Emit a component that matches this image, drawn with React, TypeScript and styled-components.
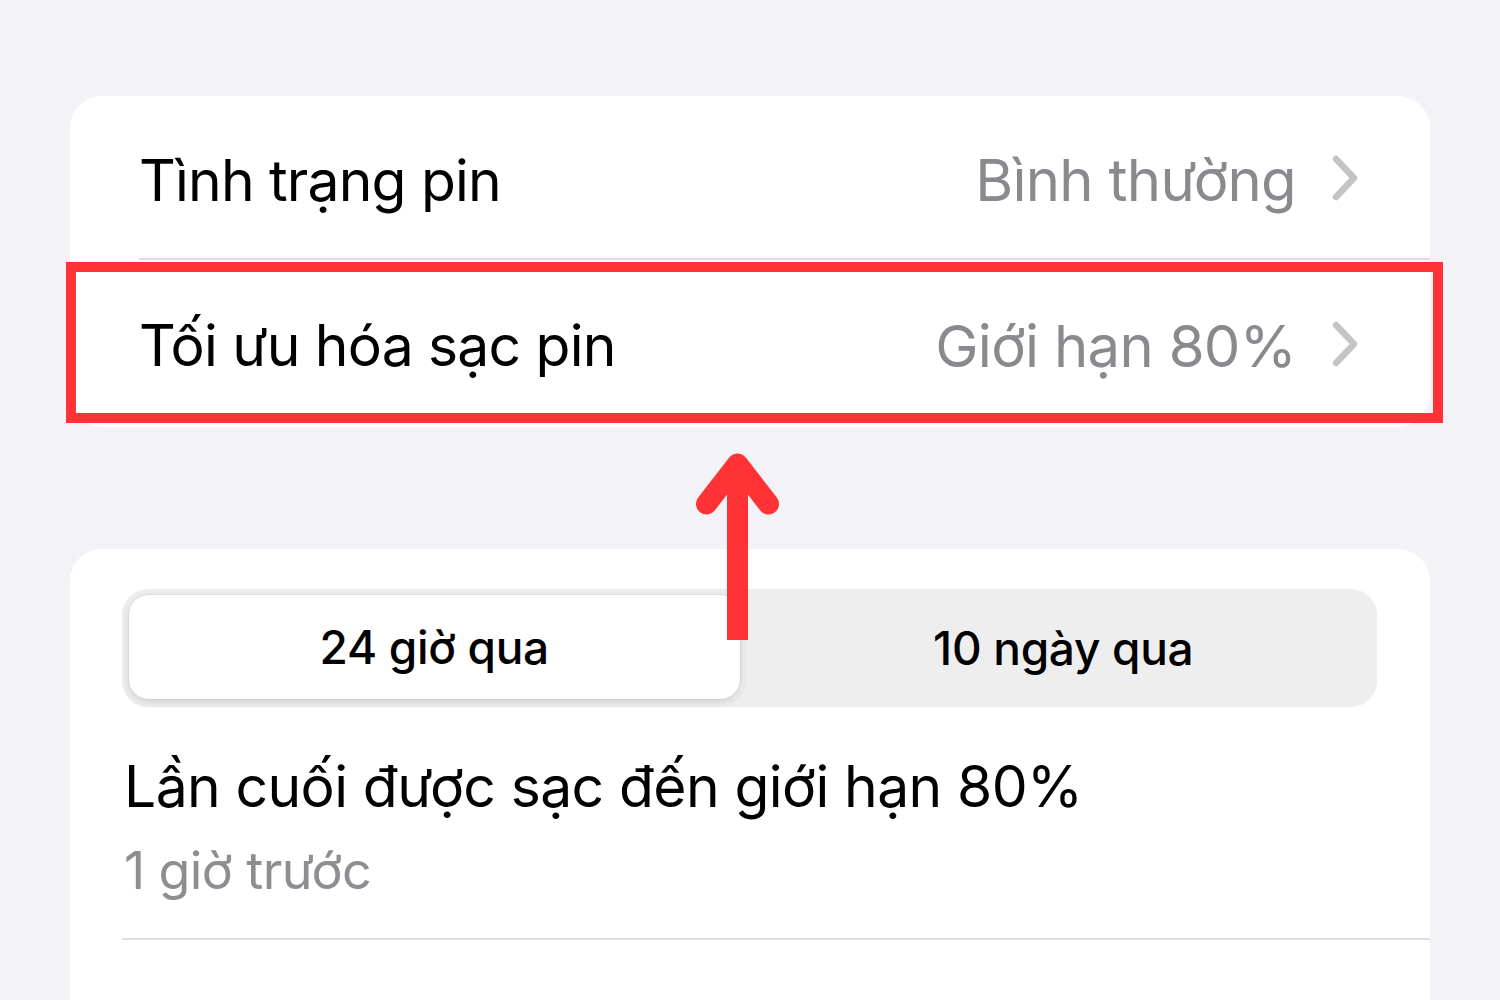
import React from "react";
import styled, { createGlobalStyle } from "styled-components";

const Global = createGlobalStyle`
  html, body { margin: 0; padding: 0; background: #f2f2f7; }
  body { font-family: Inter, "Noto Sans", "Liberation Sans", sans-serif; -webkit-font-smoothing: antialiased; }
`;

const Page = styled.div`
  position: relative;
  width: 1500px;
  height: 1000px;
  overflow: hidden;
  box-sizing: border-box;
  padding: 96px 70px 0 70px;
  display: flex;
  flex-direction: column;
  gap: 122px;
`;

const Card = styled.div<{ $open?: boolean }>`
  background: #ffffff;
  border-radius: ${(p) => (p.$open ? "32px 32px 0 0" : "32px")};
  display: flex;
  flex-direction: column;
  ${(p) => (p.$open ? "padding: 40px 0 0 52px; flex: 1;" : "")}
`;

const Row = styled.div<{ $last?: boolean }>`
  position: relative;
  height: ${(p) => (p.$last ? "167px" : "164px")};
  display: flex;
  align-items: center;
  padding: 0 72px 0 69px;
  ${(p) =>
    !p.$last &&
    `&::after {
      content: "";
      position: absolute;
      left: 69px;
      right: 0;
      bottom: 0;
      height: 2px;
      background: #dedee0;
    }`}
`;

const Label = styled.span`
  flex: 1;
  font-size: 57px;
  letter-spacing: -0.8px;
  color: #000;
  padding-top: 4px;
`;

const Value = styled.span`
  font-size: 58px;
  letter-spacing: -0.7px;
  color: #8a8a8e;
  margin-right: 36px;
  padding-top: 4px;
`;

const Highlight = styled.div`
  position: absolute;
  left: -4px;
  right: -13px;
  top: 2px;
  bottom: 4px;
  border: 10px solid #ff3336;
  pointer-events: none;
`;

const Arrow = styled.svg`
  position: absolute;
  left: 696px;
  top: 453px;
  z-index: 2;
`;

const Segmented = styled.div`
  width: 1255px;
  height: 118px;
  background: #eeeeef;
  border-radius: 26px;
  display: grid;
  grid-template-columns: 1fr 1fr;
`;

const Segment = styled.div<{ $active?: boolean }>`
  display: flex;
  align-items: center;
  justify-content: center;
  font-size: 46px;
  font-weight: 500;
  letter-spacing: -0.3px;
  color: #000;
  border-radius: 20px;
  ${(p) =>
    p.$active &&
    `background: #fff;
     margin: 6px 10px 8px 7px;
     box-shadow: 0 0 0 1px rgba(0,0,0,0.04), 0 3px 8px rgba(0,0,0,0.12);`}
`;

const Heading = styled.div`
  margin-top: 46px;
  font-size: 57px;
  letter-spacing: -0.6px;
  color: #000;
  padding-left: 2px;
  line-height: 68px;
`;

const Sub = styled.div`
  margin-top: 18px;
  font-size: 52px;
  letter-spacing: -0.6px;
  color: #8e8e92;
  padding-left: 2px;
  line-height: 64px;
`;

const Divider = styled.div`
  margin-top: 35px;
  height: 2px;
  background: #dedee0;
`;

const Chevron = () => (
  <svg width="26" height="46" viewBox="0 0 26 46">
    <polyline
      points="4,4 22,23 4,42"
      fill="none"
      stroke="#c4c4c7"
      strokeWidth="6.5"
      strokeLinecap="round"
      strokeLinejoin="round"
    />
  </svg>
);

export default function App() {
  return (
    <>
      <Global />
      <Page>
        <Card>
          <Row>
            <Label>Tình trạng pin</Label>
            <Value>Bình thường</Value>
            <Chevron />
          </Row>
          <Row $last>
            <Label>Tối ưu hóa sạc pin</Label>
            <Value>Giới hạn 80%</Value>
            <Chevron />
            <Highlight />
          </Row>
        </Card>
        <Card $open>
          <Segmented>
            <Segment $active>24 giờ qua</Segment>
            <Segment>10 ngày qua</Segment>
          </Segmented>
          <Heading>Lần cuối được sạc đến giới hạn 80%</Heading>
          <Sub>1 giờ trước</Sub>
          <Divider />
        </Card>
        <Arrow width="84" height="190" viewBox="0 0 84 190">
          <line x1="41.5" y1="20" x2="41.5" y2="187" stroke="#ff3336" strokeWidth="21" />
          <polyline
            points="10.5,51 41.5,11 72.5,51"
            fill="none"
            stroke="#ff3336"
            strokeWidth="21"
            strokeLinecap="round"
            strokeLinejoin="round"
          />
        </Arrow>
      </Page>
    </>
  );
}
